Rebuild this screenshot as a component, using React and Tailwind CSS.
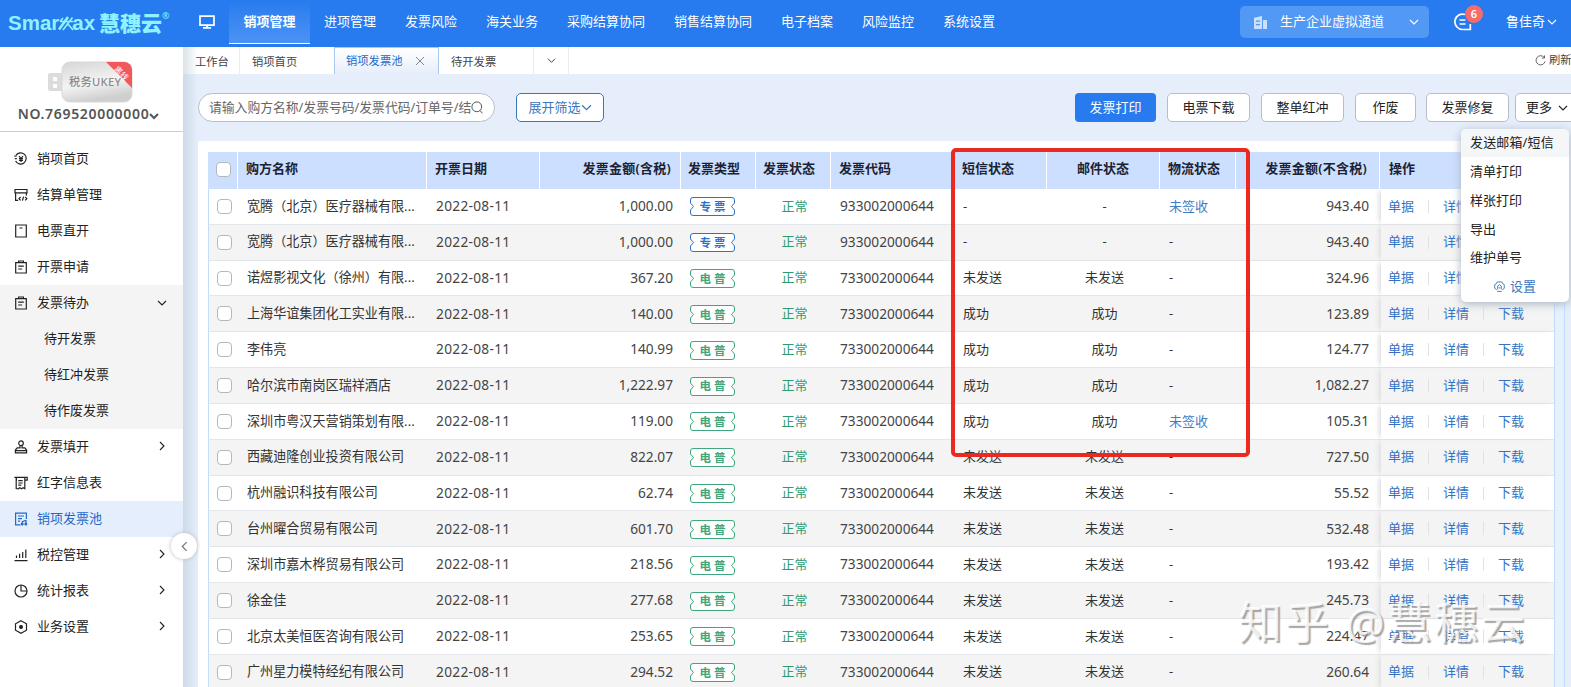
import React from "react";

const topMenus = [
  { name: "进项管理", width: "w-[81px]" },
  { name: "发票风险", width: "w-[81px]" },
  { name: "海关业务", width: "w-[81px]" },
  { name: "采购结算协同", width: "w-[107px]" },
  { name: "销售结算协同", width: "w-[107px]" },
  { name: "电子档案", width: "w-[81px]" },
  { name: "风险监控", width: "w-[81px]" },
  { name: "系统设置", width: "w-[81px]" },
];

const sideMenus = [
  { name: "销项首页", icon: "yen" },
  { name: "结算单管理", icon: "settle" },
  { name: "电票直开", icon: "doc" },
  { name: "开票申请", icon: "clipboard" },
  { name: "发票待办", icon: "clipboard", open: true, children: ["待开发票", "待红冲发票", "待作废发票"] },
  { name: "发票填开", icon: "stamp", more: true },
  { name: "红字信息表", icon: "scroll" },
  { name: "销项发票池", icon: "pool", active: true },
  { name: "税控管理", icon: "bars", more: true },
  { name: "统计报表", icon: "pie", more: true },
  { name: "业务设置", icon: "hex", more: true },
];

const rows = [
  { buyer: "宽腾（北京）医疗器械有限...", total: "1,000.00", type: "专票", code: "933002000644", sms: "-", mail: "-", ship: "未签收", net: "943.40" },
  { buyer: "宽腾（北京）医疗器械有限...", total: "1,000.00", type: "专票", code: "933002000644", sms: "-", mail: "-", ship: "-", net: "943.40" },
  { buyer: "诺煜影视文化（徐州）有限...", total: "367.20", type: "电普", code: "733002000644", sms: "未发送", mail: "未发送", ship: "-", net: "324.96" },
  { buyer: "上海华谊集团化工实业有限...", total: "140.00", type: "电普", code: "733002000644", sms: "成功", mail: "成功", ship: "-", net: "123.89" },
  { buyer: "李伟亮", total: "140.99", type: "电普", code: "733002000644", sms: "成功", mail: "成功", ship: "-", net: "124.77" },
  { buyer: "哈尔滨市南岗区瑞祥酒店", total: "1,222.97", type: "电普", code: "733002000644", sms: "成功", mail: "成功", ship: "-", net: "1,082.27" },
  { buyer: "深圳市粤汉天营销策划有限...", total: "119.00", type: "电普", code: "733002000644", sms: "成功", mail: "成功", ship: "未签收", net: "105.31" },
  { buyer: "西藏迪隆创业投资有限公司", total: "822.07", type: "电普", code: "733002000644", sms: "未发送", mail: "未发送", ship: "-", net: "727.50" },
  { buyer: "杭州融识科技有限公司", total: "62.74", type: "电普", code: "733002000644", sms: "未发送", mail: "未发送", ship: "-", net: "55.52" },
  { buyer: "台州曜合贸易有限公司", total: "601.70", type: "电普", code: "733002000644", sms: "未发送", mail: "未发送", ship: "-", net: "532.48" },
  { buyer: "深圳市嘉木桦贸易有限公司", total: "218.56", type: "电普", code: "733002000644", sms: "未发送", mail: "未发送", ship: "-", net: "193.42" },
  { buyer: "徐金佳", total: "277.68", type: "电普", code: "733002000644", sms: "未发送", mail: "未发送", ship: "-", net: "245.73" },
  { buyer: "北京太美恒医咨询有限公司", total: "253.65", type: "电普", code: "733002000644", sms: "未发送", mail: "未发送", ship: "-", net: "224.47" },
  { buyer: "广州星力模特经纪有限公司", total: "294.52", type: "电普", code: "733002000644", sms: "未发送", mail: "未发送", ship: "-", net: "260.64" },
];

const grid =
  "grid grid-cols-[30px_189px_113px_141px_75px_75px_121px_95px_113px_76px_144px_174px]";

const Chevron = ({ dir = "down", className = "" }) => (
  <svg viewBox="0 0 10 10" className={className} fill="none" stroke="currentColor" strokeWidth="1.1">
    {dir === "down" && <path d="M1 3l4 4 4-4" />}
    {dir === "right" && <path d="M3 1l4 4-4 4" />}
    {dir === "left" && <path d="M7 1L3 5l4 4" />}
  </svg>
);

const SideIcon = ({ name }) => (
  <svg viewBox="0 0 14 14" className="w-[14px] h-[14px] shrink-0" fill="none" stroke="currentColor" strokeWidth="1.2">
    {name === "yen" && (
      <>
        <path d="M2 3.2A5.6 5.6 0 1 1 1.6 9M0.3 4.2l2.4-.2M.8 6.7h2" />
        <path d="M5 4l2 2.6L9 4M7 6.6V10M5 6.7h4M5 8.4h4" />
      </>
    )}
    {name === "settle" && (
      <>
        <path d="M1 1.5h12v3.3H1zM1.6 5v7.4h2.6M12.4 5v2.5" />
        <path d="M6.6 9L5 10.7l1.600 1.700M11.200 9l1.600 1.700-1.600 1.700M9.600 8.700l-1.200 4" />
      </>
    )}
    {name === "doc" && <path d="M1.7 1h10.6v12H1.700zM5.500 4h3" />}
    {name === "clipboard" && (
      <>
        <path d="M1.7 2.6h10.6V13H1.7zM4.6 3V1h4.8v2" />
        <path d="M4.2 6.2h5.6M4.2 9h4" />
      </>
    )}
    {name === "stamp" && (
      <>
        <circle cx="7" cy="3.2" r="2.3" />
        <path d="M6 5.4v2.4H3.2L1.4 10v2.8h11.2V10l-1.8-2.2H8V5.4M2 10.6h10" />
      </>
    )}
    {name === "scroll" && (
      <>
        <path d="M2.2 12.5V1.4h11v2.8h-2.4v8.6l-1.7-1-1.6 1-1.7-1-1.6 1zM10.8 4.2V1.6M.4 1.4h2v3" />
        <path d="M4.3 4.7h4.4M4.3 7h4.4M4.3 9.2h3" />
      </>
    )}
    {name === "pool" && (
      <>
        <path d="M6.5 12.900H1.600V1.100h10.800v6" />
        <path d="M4 4h6M4 6.600h4M4 9.200h2" />
        <path d="M12 8v4.300M8.300 12.300V9.600L12 8.300" />
        <circle cx="8.200" cy="12" r=".9" />
        <circle cx="11.800" cy="12" r=".9" />
      </>
    )}
    {name === "bars" && <path d="M.5 12.6h13M2.5 10V7.6M5.6 10V5.8M8.7 10V4M11.8 10V1.4" />}
    {name === "pie" && (
      <>
        <circle cx="7" cy="7" r="6" />
        <path d="M7 1v6h6" />
      </>
    )}
    {name === "hex" && (
      <>
        <path d="M7 .7l5.5 3.1v6.4L7 13.3l-5.5-3.1V3.8z" />
        <circle cx="7" cy="7" r="1.4" fill="currentColor" />
      </>
    )}
  </svg>
);

const Logo = () => (
  <div className="w-[188px] flex items-center pl-2 pb-[2px] text-[#8ff3ff] font-bold whitespace-nowrap">
    <span className="font-['Liberation_Sans'] text-[20.5px] leading-5 font-semibold">Smar</span>
    <svg viewBox="0 0 18 20" className="w-[18px] h-[20px] -ml-[2px] shrink-0" fill="none" stroke="currentColor">
      <path strokeWidth="2.600" d="M2 16.500L11 4" />
      <path strokeWidth="1.600" d="M6 17L15.500 4.500M3 8.500h13M10 10l6 7M3 8.500L6 5" />
    </svg>
    <span className="font-['Liberation_Sans'] text-[20.5px] leading-5 -ml-[3px]">ax</span>
    <span className="text-[21px] leading-5 ml-[4px] font-black">慧穗云</span>
    <span className="text-[9px] font-normal self-start -mt-1">®</span>
  </div>
);

const TopBar = () => (
  <header className="h-[47px] shrink-0 flex items-center bg-[#277bee] text-white text-[13px]">
    <Logo />
    <div className="w-[41px] pl-[11px] pb-[3px]">
      <svg viewBox="0 0 16 14" className="w-[16px] h-[14px]" fill="none" stroke="white" strokeWidth="1.7">
        <path d="M1 1.2h14v9H1zM4 12.8h8M8 10v3" />
      </svg>
    </div>
    <div className="w-[81px] h-[44px] self-start flex items-center justify-center font-bold bg-linear-to-b from-[#277bee] to-[#4b93f5] border-b border-white">
      销项管理
    </div>
    {topMenus.map((m) => (
      <div key={m.name} className={`${m.width} text-center pb-[3px] pr-px`}>
        {m.name}
      </div>
    ))}
    <div className="ml-auto mr-[25px] mb-[3px] w-[189px] h-[32px] rounded-[5px] bg-[#5298f5] flex items-center pl-[14px] pr-[10px]">
      <svg viewBox="0 0 14 13" className="w-[14px] h-[13px] opacity-70">
        <path fill="white" fillRule="evenodd" d="M0 13V1.8L8 0v13zM2 4.5v1.2h4V4.5zM2 8v1.2h4V8zM9 4h4v9H9z" />
      </svg>
      <span className="ml-3">生产企业虚拟通道</span>
      <Chevron className="w-[10px] h-[10px] ml-auto" />
    </div>
    <div className="relative w-[18px] h-[18px] mr-[34px] mb-[3px]">
      <svg viewBox="0 0 18 18" className="w-[18px] h-[18px]" fill="none" stroke="white" strokeWidth="1.7">
        <path d="M11 1.5A7.7 7.7 0 1 0 9 16.5h7.3V11M5.5 7h6M5.5 11h6" />
      </svg>
      <span className="absolute left-[11px] -top-[8px] w-[18px] h-[18px] rounded-full bg-[#f56c6c] text-[11px] font-semibold leading-[18px] text-center">
        6
      </span>
    </div>
    <div className="flex items-center w-[65px] pb-[3px] whitespace-nowrap">
      鲁佳奇
      <Chevron className="w-[10px] h-[10px] ml-[2px]" />
    </div>
  </header>
);

const Sidebar = () => (
  <aside className="relative z-10 w-[183px] shrink-0 bg-white text-[13px] text-[#222]">
    <div className="h-[85px] border-b border-[#c9ced3] flex flex-col items-center">
      <svg viewBox="0 0 88 44" className="w-[88px] h-[44px] mt-[13px] mr-[3px] shrink-0">
        <defs>
          <linearGradient id="ukey" x1="0" y1="0" x2="0.3" y2="1">
            <stop offset="0" stopColor="#d6d6d6" />
            <stop offset="0.6" stopColor="#f4f4f4" />
            <stop offset="1" stopColor="#cfcfcf" />
          </linearGradient>
          <clipPath id="key">
            <rect x="16" y="2" width="70" height="40" rx="8" />
          </clipPath>
        </defs>
        <rect x="2" y="13" width="17" height="18" rx="2" fill="#dcdcdc" />
        <path d="M7 17h4v4H7zM7 24h4v4H7z" fill="white" />
        <rect x="16" y="2" width="70" height="40" rx="8" fill="url(#ukey)" stroke="#d8d8d8" />
        <text x="23" y="25.5" fontSize="11.2" fill="#8a8a8a" fontWeight="500" letterSpacing="0.3" fontFamily="Noto Sans, Noto Sans CJK SC, sans-serif">
          税务UKEY
        </text>
        <path d="M60 2h26v26z" fill="#f0585c" clipPath="url(#key)" />
        <text x="67.5" y="9.500" fontSize="8" fill="white" transform="rotate(45 67.500 9.500)" fontFamily="Noto Sans CJK SC, sans-serif">
          离线
        </text>
      </svg>
      <div className="flex items-center text-[14px] leading-5 font-semibold tracking-[0.68px] text-[#555] -ml-[6px]">
        NO.769520000000
        <Chevron className="w-[10px] h-[10px] mt-1 stroke-2" />
      </div>
    </div>
    <nav className="pt-[9px]">
      {sideMenus.map((m) => (
        <div key={m.name} className={m.open ? "bg-[#f4f4f4]" : ""}>
          <div className={`h-[36px] flex items-center pl-[14px] pr-[16px] ${m.active ? "bg-[#e4eefd] text-[#2468c8]" : ""}`}>
            <SideIcon name={m.icon} />
            <span className="ml-[9px]">{m.name}</span>
            {m.open && <Chevron className="w-[10px] h-[10px] ml-auto" />}
            {m.more && <Chevron dir="right" className="w-[10px] h-[10px] ml-auto mb-[2px]" />}
          </div>
          {m.children?.map((c) => (
            <div key={c} className="h-[36px] flex items-center pl-[44px]">
              {c}
            </div>
          ))}
        </div>
      ))}
    </nav>
    <button className="absolute left-[171px] top-[486px] z-10 w-[26px] h-[26px] rounded-full bg-white shadow-[0_0_4px_#bbb] flex items-center justify-center text-[#777]">
      <Chevron dir="left" className="w-[11px] h-[11px]" />
    </button>
    <div className="absolute left-full top-0 bottom-0 w-[15px] bg-linear-to-r from-[#b4c8d480] to-[#dce8fa00]" />
  </aside>
);

const Tabs = () => (
  <div className="h-[27px] shrink-0 bg-white flex text-[11.3px] text-[#444] leading-[30px]">
    <div className="w-[57px] pl-3 border-r border-[#e8edf3]">工作台</div>
    <div className="w-[94px] pl-3">销项首页</div>
    <div className="w-[105px] flex items-center pl-[11px] pr-[14px] border-x border-t border-[#a9c9ef] bg-linear-to-b from-white to-[#e6eefb] text-[#2468c8]">
      销项发票池
      <svg viewBox="0 0 8 8" className="w-[8px] h-[8px] ml-auto" stroke="#777" strokeWidth="0.9">
        <path d="M0 0l8 8M8 0L0 8" />
      </svg>
    </div>
    <div className="w-[95px] pl-3 border-r border-[#e8edf3]">待开发票</div>
    <div className="w-[35px] flex items-center justify-center border-r border-[#e8edf3]">
      <Chevron className="w-[9px] h-[9px]" />
    </div>
    <div className="ml-auto flex items-center whitespace-nowrap w-[36px] pb-px">
      <svg viewBox="0 0 12 12" className="w-[11px] h-[11px] mr-[3px] shrink-0" fill="none" stroke="#555" strokeWidth="1">
        <path d="M10 2.6A5 5 0 1 0 11 7M10.4 0.5v2.8H7.6" />
      </svg>
      刷新
    </div>
  </div>
);

const Toolbar = () => (
  <div className="h-[67px] shrink-0 flex items-center pl-[15px] text-[13px] text-[#222]">
    <div className="w-[297px] h-[29px] rounded-full border border-[#b8bec8] bg-white flex items-center pl-[10px] text-[#666] text-[12.800px] whitespace-nowrap overflow-hidden">
      请输入购方名称/发票号码/发票代码/订单号/结
      <svg viewBox="0 0 12 13" className="w-[12px] h-[13px] shrink-0" fill="none" stroke="#555" strokeWidth="1">
        <circle cx="5.8" cy="5.8" r="4.9" />
        <path d="M9 9.5l2.4 2.8" />
      </svg>
    </div>
    <div className="ml-[21px] w-[88px] h-[29px] rounded-[5px] border border-[#3a77b8] bg-white text-[#3a76bd] flex items-center justify-center">
      展开筛选
      <Chevron className="w-[11px] h-[11px]" />
    </div>
    <div className="ml-auto flex gap-[11px] -mr-[16px]">
      <button className="w-[81px] h-[29px] rounded-[4px] bg-[#277bee] text-white">发票打印</button>
      <button className="w-[83px] h-[29px] rounded-[5px] border border-[#b8bec8] bg-white">电票下载</button>
      <button className="w-[83px] h-[29px] rounded-[5px] border border-[#b8bec8] bg-white">整单红冲</button>
      <button className="w-[61px] h-[29px] rounded-[5px] border border-[#b8bec8] bg-white">作废</button>
      <button className="-ml-px w-[83px] h-[29px] rounded-[5px] border border-[#b8bec8] bg-white">发票修复</button>
      <button className="-ml-[5px] w-[72px] h-[29px] rounded-[5px] border border-[#b8bec8] bg-white flex items-center pl-[10px]">
        更多
        <Chevron className="w-[10px] h-[10px] ml-[6px]" />
      </button>
    </div>
  </div>
);

const TypeTag = ({ type }) => (
  <div className={`relative w-[45px] h-[19px] flex items-center justify-center ${type === "专票" ? "text-[#2a74cc]" : "text-[#3fa67d]"}`}>
    <svg viewBox="0 0 45 19" className="absolute inset-0 w-[45px] h-[19px]" fill="white" stroke="currentColor" strokeWidth="1">
      <path d="M3 .5h39q2.5 0 2.5 2.5v3l-3 3.5 3 3.5v3q0 2.5-2.5 2.5H3Q.5 18.500.5 16v-3l3-3.500-3-3.500V3Q.5.5 3 .5z" />
    </svg>
    <span className="relative text-[11.500px] font-bold tracking-[3px] -mr-[3px]">{type}</span>
  </div>
);

const Check = () => <span className="block w-[15px] h-[15px] rounded-[4px] border border-[#b4b8be] bg-white" />;

const num = "text-[13.7px] text-[#444]";

const InvoiceTable = () => (
  <div className="flex-1 min-h-0 w-[1367px] ml-[15px] bg-white pt-[11px] pl-[10px] rounded-tl-[3px] border-r border-[#c5dcf8] overflow-hidden">
    <div className="w-[1356px] bg-[#e6f1fe]">
      <div className="w-[1347px] border-r border-[#c5dcf8] text-[13px] text-[#333]">
        <div className={`${grid} h-[37px] bg-[#cddffe] text-[#1b2233] font-semibold items-stretch *:flex *:items-center *:border-r *:border-white *:pb-[3px]`}>
          <div className="pl-2"><Check /></div>
          <div className="pl-2">购方名称</div>
          <div className="pl-2">开票日期</div>
          <div className="justify-end pr-[9px] tracking-[0.25px]">发票金额(含税)</div>
          <div className="pl-[7px]">发票类型</div>
          <div className="pl-[7px]">发票状态</div>
          <div className="pl-2">发票代码</div>
          <div className="pl-[10px]">短信状态</div>
          <div className="justify-center">邮件状态</div>
          <div className="pl-2">物流状态</div>
          <div className="justify-end pr-[12px] tracking-[0.25px]">发票金额(不含税)</div>
          <div className="pl-[9px]">操作</div>
        </div>
        {rows.map((r, i) => (
          <div
            key={i}
            className={`${grid} h-[35.830px] items-stretch border-b border-l border-b-[#e3e6ea] border-l-[#c5dcf8] whitespace-nowrap *:flex *:items-center ${i % 2 ? "bg-[#f4f4f4]" : "bg-white"}`}
          >
            <div className="pl-2"><Check /></div>
            <div className="pl-2 text-[13.1px]">{r.buyer}</div>
            <div className={`pl-2 tracking-[0.3px] ${num}`}>2022-08-11</div>
            <div className={`justify-end pr-[9px] ${num}`}>{r.total}</div>
            <div className="pl-[8px] pt-px"><TypeTag type={r.type} /></div>
            <div className="justify-center text-[#2f9b70]">正常</div>
            <div className={`pl-2 ${num}`}>{r.code}</div>
            <div className="pl-[10px]">{r.sms}</div>
            <div className="justify-center">{r.mail}</div>
            <div className={`pl-2 ${r.ship === "-" ? "" : "text-[#3f7cc4]"}`}>{r.ship}</div>
            <div className={`justify-end pr-[12px] ${num}`}>{r.net}</div>
            <div className="pl-[7px] text-[#3572c6] shadow-[-4px_0_5px_-2px_#dcdcdc]">
              单据
              <span className="w-px h-[13px] bg-[#dfe2e6] mx-[14px]" />
              详情
              <span className="w-px h-[13px] bg-[#dfe2e6] mx-[14px]" />
              下载
            </div>
          </div>
        ))}
      </div>
    </div>
  </div>
);

const MoreMenu = () => (
  <div className="absolute left-[1461px] top-[129px] z-20 w-[108px] h-[173px] rounded-[5px] bg-white shadow-[0_2px_10px_#aab4c2] overflow-hidden text-[13px] text-[#222]">
    <div className="h-[28px] flex items-center pl-[9px] bg-[#f5f6f8] tracking-[0.15px]">发送邮箱/短信</div>
    <div className="h-[29px] flex items-center pl-[9px]">清单打印</div>
    <div className="h-[29px] flex items-center pl-[9px]">样张打印</div>
    <div className="h-[29px] flex items-center pl-[9px]">导出</div>
    <div className="h-[28px] flex items-center pl-[9px]">维护单号</div>
    <div className="h-[29px] flex items-center justify-center text-[#3a76bd]">
      <svg viewBox="0 0 12 12" className="w-[11px] h-[11px] mr-[5px]" fill="none" stroke="currentColor" strokeWidth="1">
        <path d="M3.500 1h5l1 2 1.700 1v4L9 9.500M3 9.500L.8 8V4l1.700-1 1-2M3.500 11.300h5" />
        <path d="M4 9V5.500l2-1.500 2 1.500V9M5 7.500h2" />
      </svg>
      设置
    </div>
  </div>
);

const App = () => (
  <div className="relative w-[1571px] h-[687px] overflow-hidden flex flex-col bg-[#e6eefb] font-['Noto_Sans','Noto_Sans_CJK_SC',sans-serif]">
    <TopBar />
    <div className="flex flex-1 min-h-0">
      <Sidebar />
      <main className="flex-1 min-w-0 flex flex-col">
        <Tabs />
        <Toolbar />
        <InvoiceTable />
      </main>
    </div>
    <MoreMenu />
    {/* highlighted status columns */}
    <div className="absolute left-[951px] top-[148px] z-20 w-[299px] h-[309px] border-4 border-[#ea2a20] rounded-[5px]" />
    <div className="absolute left-[1238px] top-[590px] z-20 text-[44px] tracking-[2.600px] leading-[64px] whitespace-nowrap text-white/80 [text-shadow:2px_2px_1px_#888b]">
      知乎 @慧穗云
    </div>
  </div>
);

export default App;
